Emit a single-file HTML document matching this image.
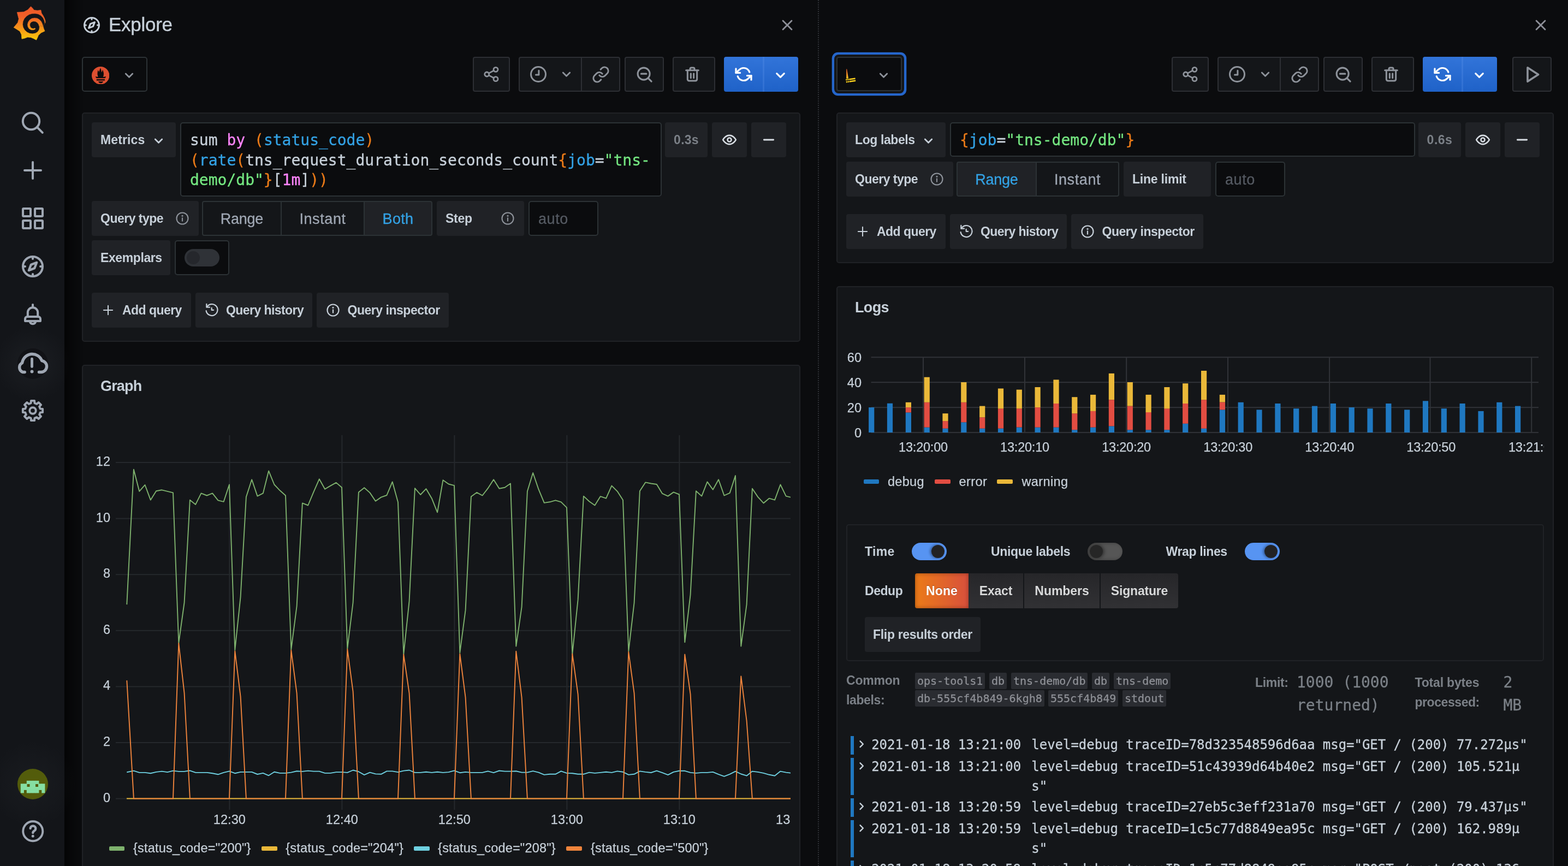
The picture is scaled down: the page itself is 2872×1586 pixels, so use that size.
<!DOCTYPE html>
<html lang="en"><head><meta charset="utf-8"><title>Explore - Grafana</title>
<style>

*{box-sizing:border-box;margin:0;padding:0}
html,body{width:2872px;height:1586px;background:#0b0c0e}
body{position:relative;font-family:"Liberation Sans",sans-serif;color:#c7d0d9;font-size:24px;-webkit-font-smoothing:antialiased}
#app{position:absolute;left:0;top:0;width:2872px;height:1586px;overflow:hidden;will-change:transform}
.abs{position:absolute}
.mono{font-family:"DejaVu Sans Mono","Liberation Mono",monospace;-webkit-text-stroke:.3px}
span{white-space:pre}
#side{position:absolute;left:0;top:0;width:118px;height:1586px;background:#131519}
#sideshadow{position:absolute;left:118px;top:0;width:34px;height:1586px;background:linear-gradient(90deg,rgba(0,0,0,.62),rgba(0,0,0,.35) 35%,rgba(0,0,0,0))}
.panel{position:absolute;background:#141619;border:2px solid #202226;border-radius:5px}
.lbl{position:absolute;height:64px;background:#202226;border-radius:4px;color:#c7d0d9;font-weight:bold;font-size:23px;line-height:64px;padding-left:16px}
.btn2{position:absolute;height:64px;background:#202226;border-radius:4px;color:#c7d0d9;font-weight:bold;font-size:23px;line-height:64px}
.inp{position:absolute;background:#0b0c0e;border:2px solid #2c3235;border-radius:5px}
.tb{position:absolute;top:104px;height:64px;background:#141619;border:2px solid #2d2f34;border-radius:4px}
.tb svg,.ic{position:absolute}
.run{position:absolute;top:104px;height:64px;border-radius:4px;background:linear-gradient(180deg,#3274d9,#1f62c8)}
.radio{-webkit-text-stroke:.3px;position:absolute;height:64px;border:2px solid #2c3235;background:#141619;color:#9fa7b3;font-size:27px;line-height:62px;text-align:center}
.radio.on{background:#202226;color:#33a2e5}
.code{position:absolute;font-size:28px;line-height:36.4px;color:#c7d0d9}
.c-o{color:#eb7b18}.c-b{color:#33a2e5}.c-p{color:#fe85fc}.c-g{color:#74e680}
.ph{color:#555a62;font-size:27px;-webkit-text-stroke:.3px}
.sw{position:absolute;width:64px;height:32px;border-radius:16px}
.sw i{position:absolute;top:4px;width:24px;height:24px;border-radius:12px;display:block}
.axis{-webkit-text-stroke:.25px;font-size:23.5px;color:#c7d0d9;position:absolute;white-space:pre}
.chip{position:absolute;height:30px;background:#2a2c31;color:#8e9096;font-size:20px;line-height:30px;padding:0 4px;border-radius:2px}
.meta{position:absolute;color:#7b8087;font-weight:bold;font-size:23px;line-height:36px}
.metav{position:absolute;color:#7b8087;font-size:28px;line-height:42px}
.lr{position:absolute;font-size:24px;line-height:36.300px;color:#c7d0d9;white-space:pre}
.lvl{position:absolute;left:1558px;width:6px;background:#1f78c1}
.ded{position:absolute;top:1050px;height:64px;background:linear-gradient(180deg,#262629,#313134);text-shadow:0 -1px 1px rgba(0,0,0,.35);color:#d8d9da;font-weight:bold;font-size:23px;line-height:64px;text-align:center}

</style></head>
<body>
<div id="app">
<div id="side"></div><div id="sideshadow"></div>
<svg class="abs" style="left:22px;top:8px" width="64" height="70" viewBox="0 0 1301 1423"><defs><linearGradient id="lg" gradientUnits="userSpaceOnUse" x1="0" y1="80" x2="0" y2="1325"><stop offset="0" stop-color="#f05a28"/><stop offset=".3" stop-color="#f05f28"/><stop offset="1" stop-color="#fbca0a"/></linearGradient></defs><polygon fill="url(#lg)" stroke="url(#lg)" stroke-width="14" stroke-linejoin="round" points="700,80 760,135 822,215 950,228 1075,212 1100,330 1160,420 1210,520 1240,620 1237,692 1215,700 1155,808 1180,900 1220,995 1085,1058 985,1150 950,1235 905,1325 800,1272 700,1230 580,1220 470,1262 365,1285 350,1120 290,1000 180,930 65,860 215,680 252,540 215,400 190,295 440,282 588,202"/><polygon fill="#131519" stroke="#131519" stroke-width="10" stroke-linejoin="round" points="1215,700 1195,610 1150,510 1075,425 975,370 860,350 745,355 640,385 545,445 465,535 418,640 405,750 425,855 478,950 560,1025 660,1070 765,1083 865,1065 945,1020 995,950 1012,870 1010,800 1155,808"/><polygon fill="url(#lg)" stroke="url(#lg)" stroke-width="10" stroke-linejoin="round" points="1155,808 1124,712 1084,632 1018,564 936,516 836,506 736,526 656,580 600,660 578,750 592,840 640,910 715,950 795,952 855,928 872,902 850,885 795,905 730,890 685,845 662,775 675,705 720,655 790,628 870,635 940,675 990,740 1008,802"/></svg>
<svg class="abs" style="left:35px;top:199.5px" width="48" height="48" viewBox="0 0 24 24" fill="none" stroke="#9fa7b3" stroke-width="2" stroke-linecap="round" stroke-linejoin="round" color="#9fa7b3"><circle cx="11" cy="11" r="7.6"/><line x1="16.600" y1="16.600" x2="21.400" y2="21.400"/></svg>
<svg class="abs" style="left:36px;top:287.5px" width="48" height="48" viewBox="0 0 24 24" fill="none" stroke="#9fa7b3" stroke-width="2" stroke-linecap="round" stroke-linejoin="round" color="#9fa7b3"><line x1="12" y1="4.5" x2="12" y2="19.5"/><line x1="4.5" y1="12" x2="19.5" y2="12"/></svg>
<svg class="abs" style="left:36px;top:376px" width="48" height="48" viewBox="0 0 24 24" fill="none" stroke="#9fa7b3" stroke-width="2" stroke-linecap="round" stroke-linejoin="round" color="#9fa7b3"><rect x="3" y="3" width="7" height="7" rx=".6"/><rect x="14" y="3" width="7" height="7" rx=".6"/><rect x="3" y="14" width="7" height="7" rx=".6"/><rect x="14" y="14" width="7" height="7" rx=".6"/></svg>
<svg class="abs" style="left:36px;top:463.5px" width="48" height="48" viewBox="0 0 24 24" fill="none" stroke="#9fa7b3" stroke-width="2" stroke-linecap="round" stroke-linejoin="round" color="#9fa7b3"><circle cx="12" cy="12" r="9"/><line x1="12" y1="3.5" x2="12" y2="5"/><line x1="12" y1="19" x2="12" y2="20.5"/><line x1="3.5" y1="12" x2="5" y2="12"/><line x1="19" y1="12" x2="20.5" y2="12"/><path d="M15.6 8.4 L10.4 10.4 L8.4 15.6 L13.6 13.6Z" stroke-width="2.1"/></svg>
<svg class="abs" style="left:36px;top:552px" width="48" height="48" viewBox="0 0 24 24" fill="none" stroke="#9fa7b3" stroke-width="2" stroke-linecap="round" stroke-linejoin="round" color="#9fa7b3"><path d="M7.400 13.600V10.200a4.600 4.600 0 0 1 9.200 0v3.400"/><path d="M7 14h10a2 2 0 0 1 2 2v2H5v-2a2 2 0 0 1 2-2z"/><path d="M9.4 18.6a2.7 2.7 0 0 0 5.2 0"/><line x1="12" y1="3" x2="12" y2="5"/></svg>
<div class="abs" style="left:-10px;top:596px;width:140px;height:140px;border-radius:70px;background:radial-gradient(circle,rgba(40,43,48,.4) 0,rgba(40,43,48,.18) 40%,rgba(40,43,48,0) 70%)"></div>
<div class="abs" style="left:32px;top:638px;width:56px;height:56px;border-radius:28px;background:#111216"></div>
<svg class="abs" style="left:25.7px;top:632px" width="65" height="65" viewBox="0 0 24 24" fill="none" stroke="#9fa7b3" stroke-width="2" stroke-linecap="round" stroke-linejoin="round" color="#9fa7b3"><path d="M16.8 18.3h1.4a3.9 3.9 0 0 0 .5-7.75 6.9 6.9 0 0 0-13.3 1.5A3.4 3.4 0 0 0 5.9 18.3h1.2"/><line x1="12" y1="9.300" x2="12" y2="14.600" stroke-width="1.800"/><circle cx="12" cy="17.900" r=".500" fill="currentColor" stroke-width="1.200"/></svg>
<svg class="abs" style="left:37px;top:728.5px" width="46" height="46" viewBox="0 0 24 24" fill="none" stroke="#9fa7b3" stroke-width="2" stroke-linecap="round" stroke-linejoin="round" color="#9fa7b3"><path d="M19.20 10.27 L21.46 10.35 L21.46 13.65 L19.20 13.73 L18.31 15.87 L19.85 17.52 L17.52 19.85 L15.87 18.31 L13.73 19.20 L13.65 21.46 L10.35 21.46 L10.27 19.20 L8.13 18.31 L6.48 19.85 L4.15 17.52 L5.69 15.87 L4.80 13.73 L2.54 13.65 L2.54 10.35 L4.80 10.27 L5.69 8.13 L4.15 6.48 L6.48 4.15 L8.13 5.69 L10.27 4.80 L10.35 2.54 L13.65 2.54 L13.73 4.80 L15.87 5.69 L17.52 4.15 L19.85 6.48 L18.31 8.13Z"/><circle cx="12" cy="12" r="3"/></svg>
<div class="abs" style="left:-20px;top:1356px;width:160px;height:160px;border-radius:80px;background:radial-gradient(circle,rgba(40,43,48,.28) 0,rgba(40,43,48,.12) 45%,rgba(40,43,48,0) 70%)"></div>
<svg class="abs" style="left:32px;top:1408px" width="56" height="56" viewBox="0 0 56 56"><circle cx="28" cy="28" r="28" fill="#535c0b"/><rect x="16.8" y="21.8" width="6.1" height="6.1" fill="#86dfa3"/><rect x="22.3" y="21.8" width="6.1" height="6.1" fill="#86dfa3"/><rect x="27.8" y="21.8" width="6.1" height="6.1" fill="#86dfa3"/><rect x="33.3" y="21.8" width="6.1" height="6.1" fill="#86dfa3"/><rect x="5.8" y="27.3" width="6.1" height="6.1" fill="#86dfa3"/><rect x="11.3" y="27.3" width="6.1" height="6.1" fill="#86dfa3"/><rect x="16.8" y="27.3" width="6.1" height="6.1" fill="#86dfa3"/><rect x="22.3" y="27.3" width="6.1" height="6.1" fill="#86dfa3"/><rect x="27.8" y="27.3" width="6.1" height="6.1" fill="#86dfa3"/><rect x="33.3" y="27.3" width="6.1" height="6.1" fill="#86dfa3"/><rect x="38.8" y="27.3" width="6.1" height="6.1" fill="#86dfa3"/><rect x="44.3" y="27.3" width="6.1" height="6.1" fill="#86dfa3"/><rect x="5.8" y="32.8" width="6.1" height="6.1" fill="#86dfa3"/><rect x="11.3" y="32.8" width="6.1" height="6.1" fill="#86dfa3"/><rect x="16.8" y="32.8" width="6.1" height="6.1" fill="#86dfa3"/><rect x="22.3" y="32.8" width="6.1" height="6.1" fill="#86dfa3"/><rect x="27.8" y="32.8" width="6.1" height="6.1" fill="#86dfa3"/><rect x="33.3" y="32.8" width="6.1" height="6.1" fill="#86dfa3"/><rect x="38.8" y="32.8" width="6.1" height="6.1" fill="#86dfa3"/><rect x="44.3" y="32.8" width="6.1" height="6.1" fill="#86dfa3"/><rect x="5.8" y="38.3" width="6.1" height="6.1" fill="#86dfa3"/><rect x="16.8" y="38.3" width="6.1" height="6.1" fill="#86dfa3"/><rect x="22.3" y="38.3" width="6.1" height="6.1" fill="#86dfa3"/><rect x="27.8" y="38.3" width="6.1" height="6.1" fill="#86dfa3"/><rect x="33.3" y="38.3" width="6.1" height="6.1" fill="#86dfa3"/><rect x="44.3" y="38.3" width="6.1" height="6.1" fill="#86dfa3"/><rect x="17.5" y="28" width="5" height="5" fill="#535c0b"/><rect x="33" y="28" width="5" height="5" fill="#535c0b"/></svg>
<svg class="abs" style="left:36.75px;top:1498.75px" width="46.5" height="46.5" viewBox="0 0 24 24" fill="none" stroke="#9fa7b3" stroke-width="2" stroke-linecap="round" stroke-linejoin="round" color="#9fa7b3"><circle cx="12" cy="12" r="9.3"/><path d="M9.6 9.4a2.5 2.5 0 1 1 3.7 2.3c-.8.5-1.3.9-1.3 1.9" stroke-width="2.2"/><circle cx="12" cy="16.6" r=".7" fill="currentColor" stroke-width="1.2"/></svg>
<svg class="abs" style="left:150px;top:28px" width="36" height="36" viewBox="0 0 24 24" fill="none" stroke="#c7d0d9" stroke-width="2" stroke-linecap="round" stroke-linejoin="round" color="#c7d0d9"><circle cx="12" cy="12" r="9"/><line x1="12" y1="3.5" x2="12" y2="5"/><line x1="12" y1="19" x2="12" y2="20.5"/><line x1="3.5" y1="12" x2="5" y2="12"/><line x1="19" y1="12" x2="20.5" y2="12"/><path d="M15.6 8.4 L10.4 10.4 L8.4 15.6 L13.6 13.6Z" stroke-width="2.1"/></svg>
<div class="abs" style="left:199px;top:22px;font-size:35px;line-height:46px;color:#c7d0d9;-webkit-text-stroke:.4px"><span id="t1" class="" style=";letter-spacing:-0.27px">Explore</span></div>
<svg class="abs" style="left:1426px;top:30px" width="32" height="32" viewBox="0 0 24 24" fill="none" stroke="#8e9099" stroke-width="2.1" stroke-linecap="round" stroke-linejoin="round" color="#8e9099"><line x1="6" y1="6" x2="18" y2="18"/><line x1="18" y1="6" x2="6" y2="18"/></svg>
<div class="abs" style="left:1498px;top:0;width:2px;height:1586px;background:repeating-linear-gradient(180deg,#2e3035 0,#2e3035 2px,transparent 2px,transparent 4px)"></div>
<div class="inp" style="left:150px;top:104px;width:120px;height:64px"></div>
<svg class="abs" style="left:167.800px;top:121.700px" width="32.400" height="32.400" viewBox="0 0 32 32"><circle cx="16" cy="16" r="16" fill="#dd4f30"/>
<path fill="#0b0c0e" d="M15.800 2.200 L17 5.900 L17.800 10.600 L19.200 7.600 L19.700 5.400 L20.900 8.600 Q22.300 12 21.500 16 L20.500 18.400 Q23.500 18.600 25.900 17.700 Q25.200 19.800 23.900 21.100 L8.700 21.100 Q7.400 19.800 6.700 17.700 Q9 18.600 11.400 18.400 Q9.600 14 10.600 9.300 L11.600 5.900 L12.200 8 L13.100 9.600 L14.400 5.900 Z"/>
<rect x="8.700" y="22.800" width="15" height="2.400" fill="#0b0c0e"/>
<path fill="#0b0c0e" d="M11.900 26.800h9c-.7 1.900-2.400 3.100-4.500 3.100s-3.800-1.200-4.500-3.100z"/></svg>
<svg class="abs" style="left:223.5px;top:125px" width="25" height="25" viewBox="0 0 24 24" fill="none" stroke="#8e939b" stroke-width="2.7" stroke-linecap="round" stroke-linejoin="round" color="#8e939b"><polyline points="6 9.500 12 15.500 18 9.500"/></svg>
<div class="tb" style="left:866px;width:68px"></div>
<svg class="abs" style="left:883.5px;top:120px" width="32" height="32" viewBox="0 0 24 24" fill="none" stroke="#8e939b" stroke-width="2.1" stroke-linecap="round" stroke-linejoin="round" color="#8e939b"><circle cx="18" cy="5.500" r="3"/><circle cx="5.800" cy="12" r="3"/><circle cx="18" cy="18.500" r="3"/><line x1="8.500" y1="13.400" x2="15.300" y2="17.100"/><line x1="15.300" y1="6.900" x2="8.500" y2="10.600"/></svg>
<div class="tb" style="left:950px;width:117px;border-radius:4px 0 0 4px"></div>
<div class="tb" style="left:1064px;width:72px;border-radius:0 4px 4px 0"></div>
<svg class="abs" style="left:967.5px;top:118px" width="36" height="36" viewBox="0 0 24 24" fill="none" stroke="#8e939b" stroke-width="2" stroke-linecap="round" stroke-linejoin="round" color="#8e939b"><circle cx="12" cy="12" r="9"/><polyline points="12.6 7.5 12.6 12.6 9 12.6"/></svg>
<svg class="abs" style="left:1025px;top:123px" width="25" height="25" viewBox="0 0 24 24" fill="none" stroke="#8e939b" stroke-width="2.7" stroke-linecap="round" stroke-linejoin="round" color="#8e939b"><polyline points="6 9.500 12 15.500 18 9.500"/></svg>
<svg class="abs" style="left:1083.5px;top:119.5px" width="33" height="33" viewBox="0 0 24 24" fill="none" stroke="#8e939b" stroke-width="2.1" stroke-linecap="round" stroke-linejoin="round" color="#8e939b"><path d="M10 13a5 5 0 0 0 7.54.54l3-3a5 5 0 0 0-7.07-7.07l-1.72 1.71"/><path d="M14 11a5 5 0 0 0-7.54-.54l-3 3a5 5 0 0 0 7.07 7.07l1.71-1.71"/></svg>
<div class="tb" style="left:1144px;width:72px"></div>
<svg class="abs" style="left:1163.5px;top:119.5px" width="33" height="33" viewBox="0 0 24 24" fill="none" stroke="#8e939b" stroke-width="2.2" stroke-linecap="round" stroke-linejoin="round" color="#8e939b"><circle cx="11" cy="11" r="8"/><line x1="16.8" y1="16.8" x2="21.2" y2="21.2"/><line x1="7.6" y1="11" x2="14.4" y2="11"/></svg>
<div class="tb" style="left:1232px;width:78px"></div>
<svg class="abs" style="left:1252px;top:120px" width="32" height="32" viewBox="0 0 24 24" fill="none" stroke="#8e939b" stroke-width="2.3" stroke-linecap="round" stroke-linejoin="round" color="#8e939b"><line x1="3.5" y1="6.5" x2="20.5" y2="6.5"/><path d="M18.5 6.5v12.5a2 2 0 0 1-2 2h-9a2 2 0 0 1-2-2V6.500m3.500 0V4.500a1.500 1.500 0 0 1 1.500-1.500h3a1.500 1.500 0 0 1 1.500 1.500v2"/><line x1="10" y1="11" x2="10" y2="17"/><line x1="14" y1="11" x2="14" y2="17"/></svg>
<div class="run" style="left:1326px;width:136px"></div>
<div class="abs" style="left:1397px;top:104px;width:3px;height:64px;background:rgba(110,160,240,.22)"></div>
<svg class="abs" style="left:1344px;top:118px" width="36" height="36" viewBox="0 0 24 24" fill="none" stroke="#ffffff" stroke-width="2.5" stroke-linecap="round" stroke-linejoin="round" color="#ffffff"><g transform="translate(1.8 1.8) scale(.85)"><polyline points="1 4 1 10 7 10"/><polyline points="23 20 23 14 17 14"/><path d="M20.49 9A9 9 0 0 0 5.64 5.64L1 10m22 4l-4.64 4.36A9 9 0 0 1 3.51 15"/></g></svg>
<svg class="abs" style="left:1416px;top:123.5px" width="27" height="27" viewBox="0 0 24 24" fill="none" stroke="#ffffff" stroke-width="2.8" stroke-linecap="round" stroke-linejoin="round" color="#ffffff"><polyline points="6 9.500 12 15.500 18 9.500"/></svg>
<div class="panel" style="left:150px;top:206px;width:1316px;height:420px"></div>
<div class="lbl" style="left:168px;top:224px;width:154px"><span id="t2" class="" style=";letter-spacing:0.12px">Metrics</span></div>
<svg class="abs" style="left:277.5px;top:245px" width="25" height="25" viewBox="0 0 24 24" fill="none" stroke="#c7d0d9" stroke-width="2.7" stroke-linecap="round" stroke-linejoin="round" color="#c7d0d9"><polyline points="6 9.500 12 15.500 18 9.500"/></svg>
<div class="inp" style="left:330px;top:224px;width:882px;height:136px"></div>
<div class="code mono" style="left:348px;top:239.400px"><span>sum </span><span class="c-p">by</span><span> </span><span class="c-o">(</span><span class="c-b">status_code</span><span class="c-o">)</span><br><span class="c-o">(</span><span class="c-b">rate</span><span class="c-o">(</span><span>tns_request_duration_seconds_count</span><span class="c-o">{</span><span class="c-b">job</span><span>=</span><span class="c-g">"tns-</span><br><span class="c-g">demo/db"</span><span class="c-o">}</span><span>[</span><span class="c-p">1m</span><span>]</span><span class="c-o">))</span></div>
<div class="btn2" style="left:1218px;top:224px;width:78px;text-align:center;color:#7b8087"><span id="t3" class="" style=";letter-spacing:0.26px">0.3s</span></div>
<div class="btn2" style="left:1304px;top:224px;width:64px"></div>
<svg class="abs" style="left:1321px;top:241px" width="30" height="30" viewBox="0 0 24 24" fill="none" stroke="#d8dde3" stroke-width="2.1" stroke-linecap="round" stroke-linejoin="round" color="#d8dde3"><path d="M2.5 12s3.500-6.500 9.500-6.500 9.500 6.500 9.500 6.500-3.500 6.500-9.500 6.500-9.500-6.500-9.500-6.500z"/><circle cx="12" cy="12" r="2.800"/></svg>
<div class="btn2" style="left:1376px;top:224px;width:64px"></div>
<svg class="abs" style="left:1392px;top:240px" width="32" height="32" viewBox="0 0 24 24" fill="none" stroke="#d8dde3" stroke-width="2.1" stroke-linecap="round" stroke-linejoin="round" color="#d8dde3"><line x1="5.500" y1="12" x2="18.500" y2="12"/></svg>
<div class="lbl" style="left:168px;top:368px;width:196px"><span id="t4" class="" style=";letter-spacing:-0.50px">Query type</span></div>
<svg class="abs" style="left:319.5px;top:386px" width="28" height="28" viewBox="0 0 24 24" fill="none" stroke="#8e939b" stroke-width="1.8" stroke-linecap="round" stroke-linejoin="round" color="#8e939b"><circle cx="12" cy="12" r="9"/><line x1="12" y1="11.500" x2="12" y2="16"/><circle cx="12" cy="8" r=".500" fill="currentColor"/></svg>
<div class="radio" style="left:370px;top:368px;width:146px;border-radius:4px 0 0 4px"><span id="t5" class="" style=";letter-spacing:-0.26px">Range</span></div>
<div class="radio" style="left:514px;top:368px;width:154px"><span id="t6" class="" style=";letter-spacing:0.59px">Instant</span></div>
<div class="radio on" style="left:666px;top:368px;width:126px;border-radius:0 4px 4px 0"><span id="t7" class="" style=";letter-spacing:0.31px">Both</span></div>
<div class="lbl" style="left:800px;top:368px;width:160px"><span id="t8" class="" style=";letter-spacing:-0.26px">Step</span></div>
<svg class="abs" style="left:915.5px;top:386px" width="28" height="28" viewBox="0 0 24 24" fill="none" stroke="#8e939b" stroke-width="1.8" stroke-linecap="round" stroke-linejoin="round" color="#8e939b"><circle cx="12" cy="12" r="9"/><line x1="12" y1="11.500" x2="12" y2="16"/><circle cx="12" cy="8" r=".500" fill="currentColor"/></svg>
<div class="inp" style="left:968px;top:368px;width:128px;height:64px"></div>
<div class="abs ph" style="left:986px;top:369.400px;line-height:64px"><span id="t9" class="" style=";letter-spacing:0.56px">auto</span></div>
<div class="lbl" style="left:168px;top:440px;width:144px"><span id="t10" class="" style=";letter-spacing:-0.40px">Exemplars</span></div>
<div class="inp" style="left:320px;top:440px;width:100px;height:64px"></div>
<div class="sw" style="left:338px;top:456px;background:#2f3237"><i style="left:4px;background:#25272c"></i></div>
<div class="btn2" style="left:168px;top:536px;width:182px"></div>
<svg class="abs" style="left:184.5px;top:555px" width="26" height="26" viewBox="0 0 24 24" fill="none" stroke="#c7d0d9" stroke-width="1.9" stroke-linecap="round" stroke-linejoin="round" color="#c7d0d9"><line x1="12" y1="4.5" x2="12" y2="19.5"/><line x1="4.5" y1="12" x2="19.5" y2="12"/></svg>
<div class="btn2" style="left:224px;top:536px;background:none"><span id="t11" class="" style=";letter-spacing:-0.55px">Add query</span></div>
<div class="btn2" style="left:358px;top:536px;width:214px"></div>
<svg class="abs" style="left:373.5px;top:553px" width="28" height="28" viewBox="0 0 24 24" fill="none" stroke="#c7d0d9" stroke-width="1.9" stroke-linecap="round" stroke-linejoin="round" color="#c7d0d9"><path d="M4.200 7.900 A9 9 0 1 1 3.100 13.900"/><polyline points="3.700 3.200 3.700 8.300 8.600 8.300"/><polyline points="11.700 9.400 11.700 12.700 14.700 12.700"/></svg>
<div class="btn2" style="left:414px;top:536px;background:none"><span id="t12" class="" style=";letter-spacing:-0.57px">Query history</span></div>
<div class="btn2" style="left:580px;top:536px;width:242px"></div>
<svg class="abs" style="left:595.5px;top:554px" width="28" height="28" viewBox="0 0 24 24" fill="none" stroke="#c7d0d9" stroke-width="1.9" stroke-linecap="round" stroke-linejoin="round" color="#c7d0d9"><circle cx="12" cy="12" r="9"/><line x1="12" y1="11.500" x2="12" y2="16"/><circle cx="12" cy="8" r=".500" fill="currentColor"/></svg>
<div class="btn2" style="left:636.5px;top:536px;background:none"><span id="t13" class="" style=";letter-spacing:-0.47px">Query inspector</span></div>
<div class="panel" style="left:150px;top:668px;width:1316px;height:940px"></div>
<div class="abs" style="left:184px;top:686.500px;font-size:27px;font-weight:bold;line-height:40px;color:#c7d0d9"><span id="t14" class="" style=";letter-spacing:-0.82px">Graph</span></div>
<svg class="abs" style="left:0;top:0" width="1470" height="1586" viewBox="0 0 1470 1586"><defs><clipPath id="gclip"><rect x="231" y="780" width="1217" height="700"/></clipPath></defs><rect x="212" y="1461.6" width="1236" height="2" fill="#25282c"/><rect x="212" y="1359.0" width="1236" height="2" fill="#25282c"/><rect x="212" y="1256.4" width="1236" height="2" fill="#25282c"/><rect x="212" y="1153.8" width="1236" height="2" fill="#25282c"/><rect x="212" y="1051.2" width="1236" height="2" fill="#25282c"/><rect x="212" y="948.6" width="1236" height="2" fill="#25282c"/><rect x="212" y="846.0" width="1236" height="2" fill="#25282c"/><rect x="419.4" y="797" width="2" height="686" fill="#25282c"/><rect x="625.4" y="797" width="2" height="686" fill="#25282c"/><rect x="831.4" y="797" width="2" height="686" fill="#25282c"/><rect x="1037.4" y="797" width="2" height="686" fill="#25282c"/><rect x="1243.4" y="797" width="2" height="686" fill="#25282c"/><g clip-path="url(#gclip)"><polyline points="232.3,1107.1 244.9,859.8 255.2,899.8 265.5,888.0 275.8,915.7 286.1,899.3 296.4,897.3 306.7,899.8 317.0,902.4 327.3,1177.9 337.6,1103.5 347.9,915.7 358.2,923.9 368.5,903.4 378.8,907.5 389.1,903.4 399.4,916.3 409.7,918.8 420.0,887.5 430.3,1190.7 440.6,1093.2 450.9,910.1 461.2,878.3 471.5,908.6 481.8,903.4 492.1,862.4 502.4,887.5 512.7,898.3 523.0,907.5 533.3,1189.7 543.6,1110.2 553.9,921.4 564.2,925.5 574.5,900.9 584.8,877.3 595.1,895.7 605.4,889.6 615.7,883.9 626.0,892.7 636.3,1188.1 646.6,1103.5 656.9,901.4 667.2,893.2 677.5,902.4 687.8,917.8 698.1,910.6 708.4,907.0 718.7,882.4 729.0,919.8 739.3,1198.4 749.6,1100.9 759.9,894.2 770.2,906.0 780.5,895.2 790.8,912.7 801.1,938.3 811.4,879.3 821.7,886.5 832.0,889.1 842.3,1195.8 852.6,1117.4 862.9,909.6 873.2,901.9 883.5,907.5 893.8,894.2 904.1,878.3 914.4,894.7 924.7,892.7 935.0,885.5 945.3,1183.5 955.6,1111.7 965.9,899.8 976.2,866.0 986.5,896.2 996.8,920.9 1007.1,919.3 1017.4,916.3 1027.7,919.3 1038.0,929.6 1048.3,1198.4 1058.6,1098.4 1068.9,908.6 1079.2,918.3 1089.5,925.5 1099.8,909.1 1110.1,912.7 1120.4,889.6 1130.7,899.8 1141.0,915.7 1151.3,1192.8 1161.6,1104.0 1171.9,899.3 1182.2,883.4 1192.5,885.5 1202.8,887.0 1213.1,903.9 1223.4,908.6 1233.7,901.4 1244.0,905.5 1254.3,1176.3 1264.6,1089.1 1274.9,899.3 1285.2,908.6 1295.5,882.4 1305.8,896.8 1316.1,878.3 1326.4,907.5 1336.7,902.9 1347.0,871.1 1357.3,1183.5 1367.6,1107.1 1377.9,894.7 1388.2,910.1 1398.5,921.4 1408.8,912.7 1419.1,915.7 1429.4,887.5 1439.7,908.6 1450.0,911.1" fill="none" stroke="#7eb26d" stroke-width="1.9" stroke-linejoin="round"/><line x1="232" y1="1462.6" x2="1448" y2="1462.6" stroke="#eab839" stroke-width="2"/><polyline points="232.3,1414.2 244.9,1411.6 255.2,1414.9 265.5,1414.9 275.8,1416.2 286.1,1413.9 296.4,1412.6 306.7,1414.1 317.0,1411.6 327.3,1412.9 337.6,1412.9 347.9,1411.3 358.2,1414.9 368.5,1414.9 378.8,1414.9 389.1,1416.2 399.4,1418.3 409.7,1414.9 420.0,1412.3 430.3,1416.2 440.6,1413.9 450.9,1413.9 461.2,1413.9 471.5,1418.0 481.8,1415.9 492.1,1420.3 502.4,1413.8 512.7,1415.9 523.0,1415.9 533.3,1414.6 543.6,1412.3 553.9,1412.9 564.2,1411.6 574.5,1412.6 584.8,1412.6 595.1,1415.9 605.4,1415.9 615.7,1414.1 626.0,1414.1 636.3,1414.9 646.6,1410.5 656.9,1413.2 667.2,1419.1 677.5,1414.6 687.8,1417.4 698.1,1417.8 708.4,1412.4 718.7,1412.4 729.0,1414.1 739.3,1411.6 749.6,1410.5 759.9,1414.9 770.2,1414.9 780.5,1413.8 790.8,1414.9 801.1,1413.8 811.4,1414.9 821.7,1414.1 832.0,1411.3 842.3,1415.2 852.6,1413.9 862.9,1414.9 873.2,1414.9 883.5,1414.9 893.8,1412.3 904.1,1415.2 914.4,1411.5 924.7,1412.6 935.0,1412.6 945.3,1412.3 955.6,1414.6 965.9,1414.6 976.2,1412.1 986.5,1414.6 996.8,1418.9 1007.1,1417.8 1017.4,1417.8 1027.7,1412.3 1038.0,1415.9 1048.3,1416.2 1058.6,1417.8 1068.9,1417.8 1079.2,1414.6 1089.5,1415.9 1099.8,1414.9 1110.1,1413.8 1120.4,1414.9 1130.7,1412.4 1141.0,1413.8 1151.3,1418.9 1161.6,1417.8 1171.9,1412.4 1182.2,1413.9 1192.5,1415.0 1202.8,1411.6 1213.1,1415.2 1223.4,1419.1 1233.7,1413.9 1244.0,1411.8 1254.3,1411.8 1264.6,1414.9 1274.9,1415.9 1285.2,1414.9 1295.5,1414.9 1305.8,1413.9 1316.1,1418.2 1326.4,1421.9 1336.7,1417.8 1347.0,1412.6 1357.3,1417.5 1367.6,1420.7 1377.9,1412.6 1388.2,1413.9 1398.5,1415.9 1408.8,1418.8 1419.1,1420.7 1429.4,1412.6 1439.7,1414.6 1450.0,1415.9" fill="none" stroke="#6ed0e0" stroke-width="1.9" stroke-linejoin="round"/><polyline points="232.3,1246.1 244.9,1462.6 255.2,1462.6 265.5,1462.6 275.8,1462.6 286.1,1462.6 296.4,1462.6 306.7,1462.6 317.0,1462.6 327.3,1177.9 337.6,1269.7 347.9,1462.6 358.2,1462.6 368.5,1462.6 378.8,1462.6 389.1,1462.6 399.4,1462.6 409.7,1462.6 420.0,1462.6 430.3,1192.2 440.6,1275.9 450.9,1462.6 461.2,1462.6 471.5,1462.6 481.8,1462.6 492.1,1462.6 502.4,1462.6 512.7,1462.6 523.0,1462.6 533.3,1190.7 543.6,1269.7 553.9,1462.6 564.2,1462.6 574.5,1462.6 584.8,1462.6 595.1,1462.6 605.4,1462.6 615.7,1462.6 626.0,1462.6 636.3,1188.7 646.6,1266.6 656.9,1462.6 667.2,1462.6 677.5,1462.6 687.8,1462.6 698.1,1462.6 708.4,1462.6 718.7,1462.6 729.0,1462.6 739.3,1198.4 749.6,1269.7 759.9,1462.6 770.2,1462.6 780.5,1462.6 790.8,1462.6 801.1,1462.6 811.4,1462.6 821.7,1462.6 832.0,1462.6 842.3,1197.4 852.6,1277.4 862.9,1462.6 873.2,1462.6 883.5,1462.6 893.8,1462.6 904.1,1462.6 914.4,1462.6 924.7,1462.6 935.0,1462.6 945.3,1192.8 955.6,1277.4 965.9,1462.6 976.2,1462.6 986.5,1462.6 996.8,1462.6 1007.1,1462.6 1017.4,1462.6 1027.7,1462.6 1038.0,1462.6 1048.3,1197.4 1058.6,1271.3 1068.9,1462.6 1079.2,1462.6 1089.5,1462.6 1099.8,1462.6 1110.1,1462.6 1120.4,1462.6 1130.7,1462.6 1141.0,1462.6 1151.3,1193.8 1161.6,1269.7 1171.9,1462.6 1182.2,1462.6 1192.5,1462.6 1202.8,1462.6 1213.1,1462.6 1223.4,1462.6 1233.7,1462.6 1244.0,1462.6 1254.3,1198.4 1264.6,1271.3 1274.9,1462.6 1285.2,1462.6 1295.5,1462.6 1305.8,1462.6 1316.1,1462.6 1326.4,1462.6 1336.7,1462.6 1347.0,1462.6 1357.3,1238.4 1367.6,1320.0 1377.9,1462.6 1388.2,1462.6 1398.5,1462.6 1408.8,1462.6 1419.1,1462.6 1429.4,1462.6 1439.7,1462.6 1450.0,1462.6" fill="none" stroke="#ef843c" stroke-width="1.9" stroke-linejoin="round"/></g></svg>
<div class="axis" style="left:102px;width:100px;text-align:right;top:1445.6px;line-height:30px">0</div>
<div class="axis" style="left:102px;width:100px;text-align:right;top:1343.0px;line-height:30px">2</div>
<div class="axis" style="left:102px;width:100px;text-align:right;top:1240.4px;line-height:30px">4</div>
<div class="axis" style="left:102px;width:100px;text-align:right;top:1137.8px;line-height:30px">6</div>
<div class="axis" style="left:102px;width:100px;text-align:right;top:1035.2px;line-height:30px">8</div>
<div class="axis" style="left:102px;width:100px;text-align:right;top:932.6px;line-height:30px">10</div>
<div class="axis" style="left:102px;width:100px;text-align:right;top:830.0px;line-height:30px">12</div>
<div class="axis" style="left:360.4px;width:120px;text-align:center;top:1486.300px;line-height:30px"><span id="t15" class="" style=";letter-spacing:0.08px">12:30</span></div>
<div class="axis" style="left:566.4px;width:120px;text-align:center;top:1486.300px;line-height:30px"><span id="t16" class="" style=";letter-spacing:0.08px">12:40</span></div>
<div class="axis" style="left:772.4px;width:120px;text-align:center;top:1486.300px;line-height:30px"><span id="t17" class="" style=";letter-spacing:0.08px">12:50</span></div>
<div class="axis" style="left:978.4px;width:120px;text-align:center;top:1486.300px;line-height:30px"><span id="t18" class="" style=";letter-spacing:0.08px">13:00</span></div>
<div class="axis" style="left:1184.4px;width:120px;text-align:center;top:1486.300px;line-height:30px"><span id="t19" class="" style=";letter-spacing:0.08px">13:10</span></div>
<div class="axis" style="left:1340px;width:108px;overflow:hidden;top:1486.300px;line-height:30px;text-align:left"><span style="margin-left:81px"><span id="t20" class="" style=";letter-spacing:0.08px">13:20</span></span></div>
<div class="abs" style="left:199.6px;top:1549.500px;width:28.500px;height:8px;border-radius:2px;background:#7eb26d"></div>
<div class="axis" style="left:244.0px;top:1538px;line-height:30px"><span id="t21" class="" style=";letter-spacing:0.19px">{status_code="200"}</span></div>
<div class="abs" style="left:479.4px;top:1549.500px;width:28.500px;height:8px;border-radius:2px;background:#eab839"></div>
<div class="axis" style="left:523.3px;top:1538px;line-height:30px"><span id="t22" class="" style=";letter-spacing:0.19px">{status_code="204"}</span></div>
<div class="abs" style="left:758.2px;top:1549.500px;width:28.500px;height:8px;border-radius:2px;background:#6ed0e0"></div>
<div class="axis" style="left:802.1px;top:1538px;line-height:30px"><span id="t23" class="" style=";letter-spacing:0.19px">{status_code="208"}</span></div>
<div class="abs" style="left:1037.0px;top:1549.500px;width:28.500px;height:8px;border-radius:2px;background:#ef843c"></div>
<div class="axis" style="left:1082.0px;top:1538px;line-height:30px"><span id="t24" class="" style=";letter-spacing:0.19px">{status_code="500"}</span></div>
<svg class="abs" style="left:2806px;top:30px" width="32" height="32" viewBox="0 0 24 24" fill="none" stroke="#8e9099" stroke-width="2.1" stroke-linecap="round" stroke-linejoin="round" color="#8e9099"><line x1="6" y1="6" x2="18" y2="18"/><line x1="18" y1="6" x2="6" y2="18"/></svg>
<div class="inp" style="left:1532px;top:104px;width:120px;height:63px;box-shadow:0 0 0 4px #141619,0 0 0 8.300px #2566cb;border-radius:4px"></div>
<svg class="abs" style="left:1546px;top:124px" width="26" height="32" viewBox="0 0 26 32">
<defs><linearGradient id="lk" x1="0" y1="0" x2="0" y2="1"><stop offset="0" stop-color="#f2602a"/><stop offset=".7" stop-color="#f9a325"/><stop offset="1" stop-color="#fbd01c"/></linearGradient></defs>
<path d="M4.200 2.500 L5.200 2.500 L8 19.500 L4.200 20.200 Z" fill="url(#lk)"/>
<g transform="rotate(-8 4 24)"><rect x="3.500" y="20.800" width="17.500" height="2.500" fill="#fbd01c"/><rect x="3.500" y="25" width="17.500" height="2.500" fill="#fbd01c"/>
<rect x="5.600" y="20" width="1" height="8" fill="#0b0c0e" opacity=".7"/><rect x="8.600" y="20" width="1" height="8" fill="#0b0c0e" opacity=".7"/></g></svg>
<svg class="abs" style="left:1605.5px;top:125px" width="25" height="25" viewBox="0 0 24 24" fill="none" stroke="#8e939b" stroke-width="2.7" stroke-linecap="round" stroke-linejoin="round" color="#8e939b"><polyline points="6 9.500 12 15.500 18 9.500"/></svg>
<div class="tb" style="left:2146px;width:68px"></div>
<svg class="abs" style="left:2163.5px;top:120px" width="32" height="32" viewBox="0 0 24 24" fill="none" stroke="#8e939b" stroke-width="2.1" stroke-linecap="round" stroke-linejoin="round" color="#8e939b"><circle cx="18" cy="5.500" r="3"/><circle cx="5.800" cy="12" r="3"/><circle cx="18" cy="18.500" r="3"/><line x1="8.500" y1="13.400" x2="15.300" y2="17.100"/><line x1="15.300" y1="6.900" x2="8.500" y2="10.600"/></svg>
<div class="tb" style="left:2230px;width:117px;border-radius:4px 0 0 4px"></div>
<div class="tb" style="left:2344px;width:72px;border-radius:0 4px 4px 0"></div>
<svg class="abs" style="left:2247.5px;top:118px" width="36" height="36" viewBox="0 0 24 24" fill="none" stroke="#8e939b" stroke-width="2" stroke-linecap="round" stroke-linejoin="round" color="#8e939b"><circle cx="12" cy="12" r="9"/><polyline points="12.6 7.5 12.6 12.6 9 12.6"/></svg>
<svg class="abs" style="left:2305px;top:123px" width="25" height="25" viewBox="0 0 24 24" fill="none" stroke="#8e939b" stroke-width="2.7" stroke-linecap="round" stroke-linejoin="round" color="#8e939b"><polyline points="6 9.500 12 15.500 18 9.500"/></svg>
<svg class="abs" style="left:2363.5px;top:119.5px" width="33" height="33" viewBox="0 0 24 24" fill="none" stroke="#8e939b" stroke-width="2.1" stroke-linecap="round" stroke-linejoin="round" color="#8e939b"><path d="M10 13a5 5 0 0 0 7.54.54l3-3a5 5 0 0 0-7.07-7.07l-1.72 1.71"/><path d="M14 11a5 5 0 0 0-7.54-.54l-3 3a5 5 0 0 0 7.07 7.07l1.71-1.71"/></svg>
<div class="tb" style="left:2424px;width:72px"></div>
<svg class="abs" style="left:2443.5px;top:119.5px" width="33" height="33" viewBox="0 0 24 24" fill="none" stroke="#8e939b" stroke-width="2.2" stroke-linecap="round" stroke-linejoin="round" color="#8e939b"><circle cx="11" cy="11" r="8"/><line x1="16.8" y1="16.8" x2="21.2" y2="21.2"/><line x1="7.6" y1="11" x2="14.4" y2="11"/></svg>
<div class="tb" style="left:2512px;width:78px"></div>
<svg class="abs" style="left:2532px;top:120px" width="32" height="32" viewBox="0 0 24 24" fill="none" stroke="#8e939b" stroke-width="2.3" stroke-linecap="round" stroke-linejoin="round" color="#8e939b"><line x1="3.5" y1="6.5" x2="20.5" y2="6.5"/><path d="M18.5 6.5v12.5a2 2 0 0 1-2 2h-9a2 2 0 0 1-2-2V6.500m3.500 0V4.500a1.500 1.500 0 0 1 1.500-1.500h3a1.500 1.500 0 0 1 1.500 1.500v2"/><line x1="10" y1="11" x2="10" y2="17"/><line x1="14" y1="11" x2="14" y2="17"/></svg>
<div class="run" style="left:2606px;width:136px"></div>
<div class="abs" style="left:2677px;top:104px;width:3px;height:64px;background:rgba(110,160,240,.22)"></div>
<svg class="abs" style="left:2624px;top:118px" width="36" height="36" viewBox="0 0 24 24" fill="none" stroke="#ffffff" stroke-width="2.5" stroke-linecap="round" stroke-linejoin="round" color="#ffffff"><g transform="translate(1.8 1.8) scale(.85)"><polyline points="1 4 1 10 7 10"/><polyline points="23 20 23 14 17 14"/><path d="M20.49 9A9 9 0 0 0 5.64 5.64L1 10m22 4l-4.64 4.36A9 9 0 0 1 3.51 15"/></g></svg>
<svg class="abs" style="left:2696px;top:123.5px" width="27" height="27" viewBox="0 0 24 24" fill="none" stroke="#ffffff" stroke-width="2.8" stroke-linecap="round" stroke-linejoin="round" color="#ffffff"><polyline points="6 9.500 12 15.500 18 9.500"/></svg>
<div class="tb" style="left:2770px;width:72px"></div>
<svg class="abs" style="left:2786px;top:115.5px" width="41" height="41" viewBox="0 0 24 24" fill="none" stroke="#8e939b" stroke-width="2.1" stroke-linecap="round" stroke-linejoin="round" color="#8e939b"><path d="M7 4.500 L18.500 12 L7 19.500Z"/></svg>
<div class="panel" style="left:1532px;top:206px;width:1314px;height:276px"></div>
<div class="lbl" style="left:1550px;top:224px;width:182px"><span id="t25" class="" style=";letter-spacing:-0.40px">Log labels</span></div>
<svg class="abs" style="left:1687.5px;top:245px" width="25" height="25" viewBox="0 0 24 24" fill="none" stroke="#c7d0d9" stroke-width="2.7" stroke-linecap="round" stroke-linejoin="round" color="#c7d0d9"><polyline points="6 9.500 12 15.500 18 9.500"/></svg>
<div class="inp" style="left:1740px;top:224px;width:852px;height:63px"></div>
<div class="code mono" style="left:1758px;top:239.400px"><span class="c-o">{</span><span class="c-b">job</span><span>=</span><span class="c-g">"tns-demo/db"</span><span class="c-o">}</span></div>
<div class="btn2" style="left:2598px;top:224px;width:78px;text-align:center;color:#7b8087"><span id="t26" class="" style=";letter-spacing:0.51px">0.6s</span></div>
<div class="btn2" style="left:2684px;top:224px;width:64px"></div>
<svg class="abs" style="left:2701px;top:241px" width="30" height="30" viewBox="0 0 24 24" fill="none" stroke="#d8dde3" stroke-width="2.1" stroke-linecap="round" stroke-linejoin="round" color="#d8dde3"><path d="M2.5 12s3.500-6.500 9.500-6.500 9.500 6.500 9.500 6.500-3.500 6.500-9.500 6.500-9.500-6.500-9.500-6.500z"/><circle cx="12" cy="12" r="2.800"/></svg>
<div class="btn2" style="left:2756px;top:224px;width:64px"></div>
<svg class="abs" style="left:2772px;top:240px" width="32" height="32" viewBox="0 0 24 24" fill="none" stroke="#d8dde3" stroke-width="2.1" stroke-linecap="round" stroke-linejoin="round" color="#d8dde3"><line x1="5.500" y1="12" x2="18.500" y2="12"/></svg>
<div class="lbl" style="left:1550px;top:296px;width:196px"><span id="t27" class="" style=";letter-spacing:-0.50px">Query type</span></div>
<svg class="abs" style="left:1701.5px;top:314px" width="28" height="28" viewBox="0 0 24 24" fill="none" stroke="#8e939b" stroke-width="1.8" stroke-linecap="round" stroke-linejoin="round" color="#8e939b"><circle cx="12" cy="12" r="9"/><line x1="12" y1="11.500" x2="12" y2="16"/><circle cx="12" cy="8" r=".500" fill="currentColor"/></svg>
<div class="radio on" style="left:1752px;top:296px;width:147px;border-radius:4px 0 0 4px"><span id="t28" class="" style=";letter-spacing:-0.26px">Range</span></div>
<div class="radio" style="left:1897px;top:296px;width:153px;border-radius:0 4px 4px 0"><span id="t29" class="" style=";letter-spacing:0.59px">Instant</span></div>
<div class="lbl" style="left:2058px;top:296px;width:160px"><span id="t30" class="" style=";letter-spacing:-0.22px">Line limit</span></div>
<div class="inp" style="left:2226px;top:296px;width:128px;height:64px"></div>
<div class="abs ph" style="left:2244px;top:297.400px;line-height:64px"><span id="t31" class="" style=";letter-spacing:0.56px">auto</span></div>
<div class="btn2" style="left:1550px;top:392px;width:182px"></div>
<svg class="abs" style="left:1566.5px;top:411px" width="26" height="26" viewBox="0 0 24 24" fill="none" stroke="#c7d0d9" stroke-width="1.9" stroke-linecap="round" stroke-linejoin="round" color="#c7d0d9"><line x1="12" y1="4.5" x2="12" y2="19.5"/><line x1="4.5" y1="12" x2="19.5" y2="12"/></svg>
<div class="btn2" style="left:1606px;top:392px;background:none"><span id="t32" class="" style=";letter-spacing:-0.55px">Add query</span></div>
<div class="btn2" style="left:1740px;top:392px;width:214px"></div>
<svg class="abs" style="left:1755.5px;top:409px" width="28" height="28" viewBox="0 0 24 24" fill="none" stroke="#c7d0d9" stroke-width="1.9" stroke-linecap="round" stroke-linejoin="round" color="#c7d0d9"><path d="M4.200 7.900 A9 9 0 1 1 3.100 13.900"/><polyline points="3.700 3.200 3.700 8.300 8.600 8.300"/><polyline points="11.700 9.400 11.700 12.700 14.700 12.700"/></svg>
<div class="btn2" style="left:1796px;top:392px;background:none"><span id="t33" class="" style=";letter-spacing:-0.57px">Query history</span></div>
<div class="btn2" style="left:1962px;top:392px;width:242px"></div>
<svg class="abs" style="left:1977.5px;top:410px" width="28" height="28" viewBox="0 0 24 24" fill="none" stroke="#c7d0d9" stroke-width="1.9" stroke-linecap="round" stroke-linejoin="round" color="#c7d0d9"><circle cx="12" cy="12" r="9"/><line x1="12" y1="11.500" x2="12" y2="16"/><circle cx="12" cy="8" r=".500" fill="currentColor"/></svg>
<div class="btn2" style="left:2018.500px;top:392px;background:none"><span id="t34" class="" style=";letter-spacing:-0.47px">Query inspector</span></div>
<div class="panel" style="left:1532px;top:524px;width:1314px;height:1100px"></div>
<div class="abs" style="left:1566px;top:542.500px;font-size:27px;font-weight:bold;line-height:40px;color:#c7d0d9"><span id="t35" class="" style=";letter-spacing:-0.68px">Logs</span></div>
<svg class="abs" style="left:1532px;top:600px" width="1314" height="240" viewBox="1532 600 1314 240"><rect x="1595.500" y="653.3" width="1222.500" height="2" fill="#313338"/><rect x="1595.500" y="699.2" width="1222.500" height="2" fill="#313338"/><rect x="1595.500" y="745.2" width="1222.500" height="2" fill="#313338"/><rect x="1595.500" y="791.1" width="1222.500" height="2" fill="#313338"/><rect x="1690.0" y="654" width="2" height="139" fill="#313338"/><rect x="1876.0" y="654" width="2" height="139" fill="#313338"/><rect x="2062.2" y="654" width="2" height="139" fill="#313338"/><rect x="2248.0" y="654" width="2" height="139" fill="#313338"/><rect x="2434.1" y="654" width="2" height="139" fill="#313338"/><rect x="2618.5" y="654" width="2" height="139" fill="#313338"/><rect x="2804.2" y="654" width="2" height="139" fill="#313338"/><rect x="1591.1" y="746.1" width="10.200" height="46.0" fill="#1f78c1"/><rect x="1624.9" y="738.7" width="10.200" height="53.4" fill="#1f78c1"/><rect x="1658.8" y="755.4" width="10.200" height="36.7" fill="#1f78c1"/><rect x="1658.8" y="746.1" width="10.200" height="9.3" fill="#e24d42"/><rect x="1658.8" y="736.8" width="10.200" height="9.3" fill="#eab839"/><rect x="1692.6" y="782.6" width="10.200" height="9.5" fill="#1f78c1"/><rect x="1692.6" y="736.8" width="10.200" height="45.8" fill="#e24d42"/><rect x="1692.6" y="690.7" width="10.200" height="46.1" fill="#eab839"/><rect x="1726.4" y="784.7" width="10.200" height="7.4" fill="#1f78c1"/><rect x="1726.4" y="771.1" width="10.200" height="13.6" fill="#e24d42"/><rect x="1726.4" y="757.2" width="10.200" height="13.9" fill="#eab839"/><rect x="1760.2" y="773.3" width="10.200" height="18.8" fill="#1f78c1"/><rect x="1760.2" y="736.8" width="10.200" height="36.5" fill="#e24d42"/><rect x="1760.2" y="700.0" width="10.200" height="36.8" fill="#eab839"/><rect x="1794.1" y="784.7" width="10.200" height="7.4" fill="#1f78c1"/><rect x="1794.1" y="764.3" width="10.200" height="20.4" fill="#e24d42"/><rect x="1794.1" y="743.6" width="10.200" height="20.7" fill="#eab839"/><rect x="1827.9" y="784.7" width="10.200" height="7.4" fill="#1f78c1"/><rect x="1827.9" y="748.2" width="10.200" height="36.5" fill="#e24d42"/><rect x="1827.9" y="711.5" width="10.200" height="36.8" fill="#eab839"/><rect x="1861.7" y="782.6" width="10.200" height="9.5" fill="#1f78c1"/><rect x="1861.7" y="748.2" width="10.200" height="34.3" fill="#e24d42"/><rect x="1861.7" y="713.6" width="10.200" height="34.6" fill="#eab839"/><rect x="1895.5" y="782.6" width="10.200" height="9.5" fill="#1f78c1"/><rect x="1895.5" y="746.1" width="10.200" height="36.5" fill="#e24d42"/><rect x="1895.5" y="709.0" width="10.200" height="37.1" fill="#eab839"/><rect x="1929.4" y="782.6" width="10.200" height="9.5" fill="#1f78c1"/><rect x="1929.4" y="739.0" width="10.200" height="43.6" fill="#e24d42"/><rect x="1929.4" y="695.4" width="10.200" height="43.6" fill="#eab839"/><rect x="1963.2" y="787.2" width="10.200" height="4.9" fill="#1f78c1"/><rect x="1963.2" y="757.2" width="10.200" height="30.0" fill="#e24d42"/><rect x="1963.2" y="727.2" width="10.200" height="30.0" fill="#eab839"/><rect x="1997.0" y="782.6" width="10.200" height="9.5" fill="#1f78c1"/><rect x="1997.0" y="752.9" width="10.200" height="29.7" fill="#e24d42"/><rect x="1997.0" y="722.9" width="10.200" height="30.0" fill="#eab839"/><rect x="2030.8" y="780.4" width="10.200" height="11.7" fill="#1f78c1"/><rect x="2030.8" y="732.2" width="10.200" height="48.2" fill="#e24d42"/><rect x="2030.8" y="683.9" width="10.200" height="48.2" fill="#eab839"/><rect x="2064.7" y="787.2" width="10.200" height="4.9" fill="#1f78c1"/><rect x="2064.7" y="743.6" width="10.200" height="43.6" fill="#e24d42"/><rect x="2064.7" y="700.0" width="10.200" height="43.6" fill="#eab839"/><rect x="2098.5" y="787.2" width="10.200" height="4.9" fill="#1f78c1"/><rect x="2098.5" y="755.0" width="10.200" height="32.2" fill="#e24d42"/><rect x="2098.5" y="722.9" width="10.200" height="32.2" fill="#eab839"/><rect x="2132.3" y="787.2" width="10.200" height="4.9" fill="#1f78c1"/><rect x="2132.3" y="748.2" width="10.200" height="39.0" fill="#e24d42"/><rect x="2132.3" y="709.0" width="10.200" height="39.3" fill="#eab839"/><rect x="2166.1" y="775.8" width="10.200" height="16.3" fill="#1f78c1"/><rect x="2166.1" y="739.0" width="10.200" height="36.8" fill="#e24d42"/><rect x="2166.1" y="702.2" width="10.200" height="36.8" fill="#eab839"/><rect x="2200.0" y="784.7" width="10.200" height="7.4" fill="#1f78c1"/><rect x="2200.0" y="732.2" width="10.200" height="52.6" fill="#e24d42"/><rect x="2200.0" y="679.0" width="10.200" height="53.2" fill="#eab839"/><rect x="2233.8" y="750.4" width="10.200" height="41.7" fill="#1f78c1"/><rect x="2233.8" y="736.5" width="10.200" height="13.9" fill="#e24d42"/><rect x="2233.8" y="722.9" width="10.200" height="13.6" fill="#eab839"/><rect x="2267.6" y="736.8" width="10.200" height="55.3" fill="#1f78c1"/><rect x="2301.4" y="750.4" width="10.200" height="41.7" fill="#1f78c1"/><rect x="2335.3" y="739.0" width="10.200" height="53.1" fill="#1f78c1"/><rect x="2369.1" y="748.2" width="10.200" height="43.9" fill="#1f78c1"/><rect x="2402.9" y="743.6" width="10.200" height="48.5" fill="#1f78c1"/><rect x="2436.8" y="739.0" width="10.200" height="53.1" fill="#1f78c1"/><rect x="2470.6" y="746.1" width="10.200" height="46.0" fill="#1f78c1"/><rect x="2504.4" y="748.2" width="10.200" height="43.9" fill="#1f78c1"/><rect x="2538.2" y="739.0" width="10.200" height="53.1" fill="#1f78c1"/><rect x="2572.1" y="750.4" width="10.200" height="41.7" fill="#1f78c1"/><rect x="2605.9" y="734.3" width="10.200" height="57.8" fill="#1f78c1"/><rect x="2639.7" y="748.2" width="10.200" height="43.9" fill="#1f78c1"/><rect x="2673.5" y="739.0" width="10.200" height="53.1" fill="#1f78c1"/><rect x="2707.4" y="752.9" width="10.200" height="39.2" fill="#1f78c1"/><rect x="2741.2" y="736.8" width="10.200" height="55.3" fill="#1f78c1"/><rect x="2775.0" y="743.6" width="10.200" height="48.5" fill="#1f78c1"/></svg>
<div class="axis" style="left:1478px;width:100px;text-align:right;top:639.8px;line-height:30px">60</div>
<div class="axis" style="left:1478px;width:100px;text-align:right;top:685.7px;line-height:30px">40</div>
<div class="axis" style="left:1478px;width:100px;text-align:right;top:731.7px;line-height:30px">20</div>
<div class="axis" style="left:1478px;width:100px;text-align:right;top:777.6px;line-height:30px">0</div>
<div class="axis" style="left:1621.0px;width:140px;text-align:center;top:803.500px;line-height:30px"><span id="t36" class="" style=";letter-spacing:-0.21px">13:20:00</span></div>
<div class="axis" style="left:1807.0px;width:140px;text-align:center;top:803.500px;line-height:30px"><span id="t37" class="" style=";letter-spacing:-0.21px">13:20:10</span></div>
<div class="axis" style="left:1993.1px;width:140px;text-align:center;top:803.500px;line-height:30px"><span id="t38" class="" style=";letter-spacing:-0.21px">13:20:20</span></div>
<div class="axis" style="left:2179.2px;width:140px;text-align:center;top:803.500px;line-height:30px"><span id="t39" class="" style=";letter-spacing:-0.21px">13:20:30</span></div>
<div class="axis" style="left:2365.2px;width:140px;text-align:center;top:803.500px;line-height:30px"><span id="t40" class="" style=";letter-spacing:-0.21px">13:20:40</span></div>
<div class="axis" style="left:2551.2px;width:140px;text-align:center;top:803.500px;line-height:30px"><span id="t41" class="" style=";letter-spacing:-0.21px">13:20:50</span></div>
<div class="axis" style="left:2700px;width:128px;overflow:hidden;top:803.500px;line-height:30px"><span style="margin-left:63px"><span id="t42" class="" style=";letter-spacing:-0.21px">13:21:00</span></span></div>
<div class="abs" style="left:1581.8px;top:877.500px;width:28.500px;height:8px;border-radius:2px;background:#1f78c1"></div>
<div class="axis" style="left:1626.0px;top:866.500px;line-height:30px"><span id="t43" class="" style=";letter-spacing:0.29px">debug</span></div>
<div class="abs" style="left:1712.0px;top:877.500px;width:28.500px;height:8px;border-radius:2px;background:#e24d42"></div>
<div class="axis" style="left:1756.5px;top:866.500px;line-height:30px"><span id="t44" class="" style=";letter-spacing:0.43px">error</span></div>
<div class="abs" style="left:1826.0px;top:877.500px;width:28.500px;height:8px;border-radius:2px;background:#eab839"></div>
<div class="axis" style="left:1871.5px;top:866.500px;line-height:30px"><span id="t45" class="" style=";letter-spacing:0.36px">warning</span></div>
<div class="abs" style="left:1550px;top:960px;width:1278px;height:251px;border:2px solid #202226;border-radius:5px"></div>
<div class="abs" style="left:1584px;top:990px;color:#c7d0d9;font-weight:bold;font-size:23px;line-height:40px"><span id="t46" class="" style=";letter-spacing:0.38px">Time</span></div>
<div class="sw" style="left:1670px;top:994px;background:#5794f2"><i style="left:36px;background:#222224;box-shadow:-2px 0 5px rgba(0,0,0,.45)"></i></div>
<div class="abs" style="left:1815px;top:990px;color:#c7d0d9;font-weight:bold;font-size:23px;line-height:40px"><span id="t47" class="" style=";letter-spacing:-0.33px">Unique labels</span></div>
<div class="sw" style="left:1992px;top:994px;background:#565656;box-shadow:inset 3px 0 6px rgba(0,0,0,.35)"><i style="left:4px;background:#262626;box-shadow:2px 0 6px rgba(0,0,0,.5)"></i></div>
<div class="abs" style="left:2135.500px;top:990px;color:#c7d0d9;font-weight:bold;font-size:23px;line-height:40px"><span id="t48" class="" style=";letter-spacing:-0.36px">Wrap lines</span></div>
<div class="sw" style="left:2280px;top:994px;background:#5794f2"><i style="left:36px;background:#222224;box-shadow:-2px 0 5px rgba(0,0,0,.45)"></i></div>
<div class="abs" style="left:1584px;top:1062px;color:#c7d0d9;font-weight:bold;font-size:23px;line-height:40px"><span id="t49" class="" style=";letter-spacing:-0.45px">Dedup</span></div>
<div class="ded" style="left:1676px;width:98px;background:linear-gradient(90deg,#eb7b18,#d8503c);color:#fff;border-radius:4px 0 0 4px;box-shadow:inset 0 0 7px rgba(60,20,0,.45)"><span id="t50" class="" style=";letter-spacing:0.07px">None</span></div>
<div class="ded" style="left:1774px;width:100px"><span id="t51" class="" style=";letter-spacing:-0.22px">Exact</span></div>
<div class="ded" style="left:1876px;width:138px"><span id="t52" class="" style=";letter-spacing:-0.06px">Numbers</span></div>
<div class="ded" style="left:2016px;width:142px;border-radius:0 4px 4px 0"><span id="t53" class="" style=";letter-spacing:-0.20px">Signature</span></div>
<div class="btn2" style="left:1584px;top:1130px;width:212px;text-align:center"><span id="t54" class="" style=";letter-spacing:-0.34px">Flip results order</span></div>
<div class="meta" style="left:1550px;top:1228px"><span id="t55" class="" style=";letter-spacing:-0.23px">Common</span><br><span id="t56" class="" style=";letter-spacing:-0.37px">labels:</span></div>
<div class="chip mono" style="left:1676px;top:1232px">ops-tools1</div>
<div class="chip mono" style="left:1812px;top:1232px">db</div>
<div class="chip mono" style="left:1852px;top:1232px">tns-demo/db</div>
<div class="chip mono" style="left:2000px;top:1232px">db</div>
<div class="chip mono" style="left:2040px;top:1232px">tns-demo</div>
<div class="chip mono" style="left:1676px;top:1264px">db-555cf4b849-6kgh8</div>
<div class="chip mono" style="left:1920px;top:1264px">555cf4b849</div>
<div class="chip mono" style="left:2056px;top:1264px">stdout</div>
<div class="meta" style="left:2299px;top:1232px"><span id="t57" class="" style=";letter-spacing:-0.33px">Limit:</span></div>
<div class="metav mono" style="left:2375px;top:1228.500px">1000 (1000<br>returned)</div>
<div class="meta" style="left:2591.500px;top:1232px"><span id="t58" class="" style=";letter-spacing:-0.17px">Total bytes</span><br><span id="t59" class="" style=";letter-spacing:-0.44px">processed:</span></div>
<div class="metav mono" style="left:2753.500px;top:1228.500px">2<br>MB</div>
<div class="lvl" style="top:1348px;height:34px"></div>
<svg transform="rotate(-90)" class="abs" style="left:1566.85px;top:1352.25px" width="21.5" height="21.5" viewBox="0 0 24 24" fill="none" stroke="#c7d0d9" stroke-width="2.7" stroke-linecap="round" stroke-linejoin="round" color="#c7d0d9"><polyline points="6 9.500 12 15.500 18 9.500"/></svg>
<div class="lr mono" style="left:1596.200px;top:1346.1px;letter-spacing:-0.030px">2021-01-18 13:21:00</div>
<div class="lr mono" style="left:1889.300px;top:1346.1px;letter-spacing:-0.030px">level=debug traceID=78d323548596d6aa msg="GET / (200) 77.272µs"</div>
<div class="lvl" style="top:1388px;height:68px"></div>
<svg transform="rotate(-90)" class="abs" style="left:1566.85px;top:1392.25px" width="21.5" height="21.5" viewBox="0 0 24 24" fill="none" stroke="#c7d0d9" stroke-width="2.7" stroke-linecap="round" stroke-linejoin="round" color="#c7d0d9"><polyline points="6 9.500 12 15.500 18 9.500"/></svg>
<div class="lr mono" style="left:1596.200px;top:1386.1px;letter-spacing:-0.030px">2021-01-18 13:21:00</div>
<div class="lr mono" style="left:1889.300px;top:1386.1px;letter-spacing:-0.030px">level=debug traceID=51c43939d64b40e2 msg="GET / (200) 105.521µ<br>s"</div>
<div class="lvl" style="top:1462px;height:34px"></div>
<svg transform="rotate(-90)" class="abs" style="left:1566.85px;top:1466.25px" width="21.5" height="21.5" viewBox="0 0 24 24" fill="none" stroke="#c7d0d9" stroke-width="2.7" stroke-linecap="round" stroke-linejoin="round" color="#c7d0d9"><polyline points="6 9.500 12 15.500 18 9.500"/></svg>
<div class="lr mono" style="left:1596.200px;top:1460.1px;letter-spacing:-0.030px">2021-01-18 13:20:59</div>
<div class="lr mono" style="left:1889.300px;top:1460.1px;letter-spacing:-0.030px">level=debug traceID=27eb5c3eff231a70 msg="GET / (200) 79.437µs"</div>
<div class="lvl" style="top:1502px;height:68px"></div>
<svg transform="rotate(-90)" class="abs" style="left:1566.85px;top:1506.25px" width="21.5" height="21.5" viewBox="0 0 24 24" fill="none" stroke="#c7d0d9" stroke-width="2.7" stroke-linecap="round" stroke-linejoin="round" color="#c7d0d9"><polyline points="6 9.500 12 15.500 18 9.500"/></svg>
<div class="lr mono" style="left:1596.200px;top:1500.1px;letter-spacing:-0.030px">2021-01-18 13:20:59</div>
<div class="lr mono" style="left:1889.300px;top:1500.1px;letter-spacing:-0.030px">level=debug traceID=1c5c77d8849ea95c msg="GET / (200) 162.989µ<br>s"</div>
<div class="lvl" style="top:1576px;height:34px"></div>
<svg transform="rotate(-90)" class="abs" style="left:1566.85px;top:1580.25px" width="21.5" height="21.5" viewBox="0 0 24 24" fill="none" stroke="#c7d0d9" stroke-width="2.7" stroke-linecap="round" stroke-linejoin="round" color="#c7d0d9"><polyline points="6 9.500 12 15.500 18 9.500"/></svg>
<div class="lr mono" style="left:1596.200px;top:1574.1px;letter-spacing:-0.030px">2021-01-18 13:20:59</div>
<div class="lr mono" style="left:1889.300px;top:1574.1px;letter-spacing:-0.030px">level=debug traceID=1c5c77d8849ea95c msg="POST /post (200) 136</div>
</div>
<script>(function(){var w=window.innerWidth||2872;if(w>200&&w<2800&&(window.devicePixelRatio||1)>=1.5){var z=w/2872;document.body.style.zoom=z;var h=document.documentElement;h.style.width=w+"px";h.style.height=Math.round(1586*z)+"px";}})();</script>
</body></html>
